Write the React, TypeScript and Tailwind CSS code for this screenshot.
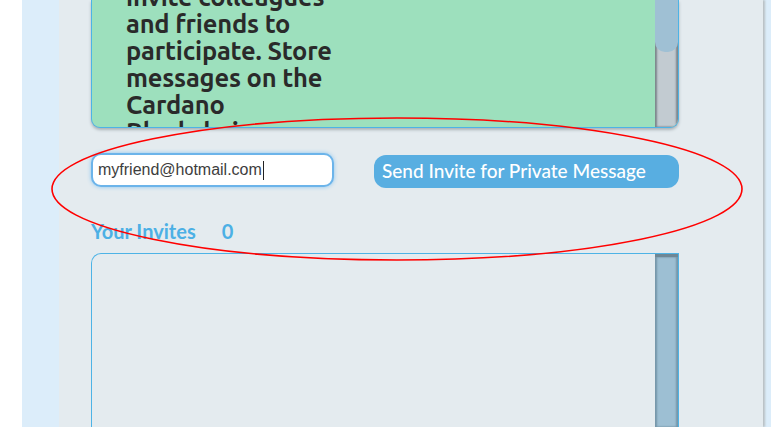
import React from "react";

const Scrollbar: React.FC<{ thumb: "top" | "full" }> = ({ thumb }) => (
  <div className="relative flex w-[23px] shrink-0 flex-col bg-[#c2cbd1] shadow-[inset_2px_0_2px_#7d868c,inset_-2px_0_2px_#7d868c]">
    {thumb === "top" ? (
      <>
        <div className="h-[52px] rounded-b-[10px] bg-[#9fc0d4]" />
        <div className="flex-1" />
      </>
    ) : (
      <div className="flex-1 border-t-[3px] border-[#6f8795] bg-[#9dbfd3] shadow-[inset_2px_0_2px_#7596a9,inset_-2px_0_2px_#7596a9]" />
    )}
  </div>
);

const lines = [
  "invite colleagues",
  "and friends to",
  "participate. Store",
  "messages on the",
  "Cardano",
  "Blockchain",
];

const App: React.FC = () => {
  return (
    <div className="relative flex h-[427px] w-[771px] overflow-hidden bg-white">
      <div className="w-[22px] shrink-0 bg-white" />
      <div className="flex flex-1 bg-[#dcedfa] pl-[37px]">
        <div className="flex h-full w-[704px] flex-col bg-[#e4ebef] pl-[32px] shadow-[2px_0_2px_#b9c0c4]">
          {/* message box */}
          <div className="flex h-[128px] w-[588px] overflow-hidden rounded-b-[9px] border-x-[1.5px] border-b-[1.5px] border-[#4db3e6] bg-[#9de0bd] shadow-[0_2px_3px_#aab3b8]">
            <div className="flex-1 overflow-hidden pl-[34px]">
              <div
                className="mt-[-17px] text-[25.5px] font-semibold leading-[27px] tracking-[-0.2px] text-[#2a2a2a]"
                style={{ fontFamily: "Ubuntu, 'Noto Sans', sans-serif" }}
              >
                {lines.map((l) => (
                  <div key={l} className="whitespace-nowrap">
                    {l}
                  </div>
                ))}
              </div>
            </div>
            <Scrollbar thumb="top" />
          </div>

          {/* invite row */}
          <div className="mt-[24px] flex items-center gap-[40px]">
            <div className="flex h-[34px] w-[243px] items-center rounded-[10px] border-2 border-[#6cb4ea] bg-white pl-[5px] shadow-[0_0_4px_#8cc6f0]">
              <span
                className="text-[16px] text-[#3d3d3d]"
                style={{ fontFamily: "'Liberation Sans', Arial, sans-serif" }}
              >
                myfriend@hotmail.com
              </span>
              <span className="ml-[1px] h-[19px] w-[1px] bg-[#222]" />
            </div>
            <button
              className="mt-[3px] h-[33px] w-[305px] rounded-[12px] bg-[#58aee1] pl-[8px] text-left text-[19px] font-medium text-white"
              style={{ fontFamily: "Lato, sans-serif" }}
            >
              Send Invite for Private Message
            </button>
          </div>

          {/* invites header */}
          <div
            className="mt-[32px] flex text-[20px] font-bold leading-[22px] text-[#4cb0e5]"
            style={{ fontFamily: "Lato, sans-serif" }}
          >
            <span>Your Invites</span>
            <span className="ml-[26px]">0</span>
          </div>

          {/* invites list */}
          <div className="mt-[11px] flex w-[588px] flex-1 overflow-hidden rounded-tl-[10px] border-l-[1.5px] border-t-[1.5px] border-r-[1.5px] border-[#4db3e6]">
            <div className="flex-1" />
            <Scrollbar thumb="full" />
          </div>
        </div>
      </div>

      {/* annotation ellipse */}
      <svg className="pointer-events-none absolute left-0 top-0" width="771" height="427">
        <ellipse cx="397" cy="189" rx="345" ry="71" fill="none" stroke="#ff0000" strokeWidth="1.6" />
      </svg>
    </div>
  );
};

export default App;
